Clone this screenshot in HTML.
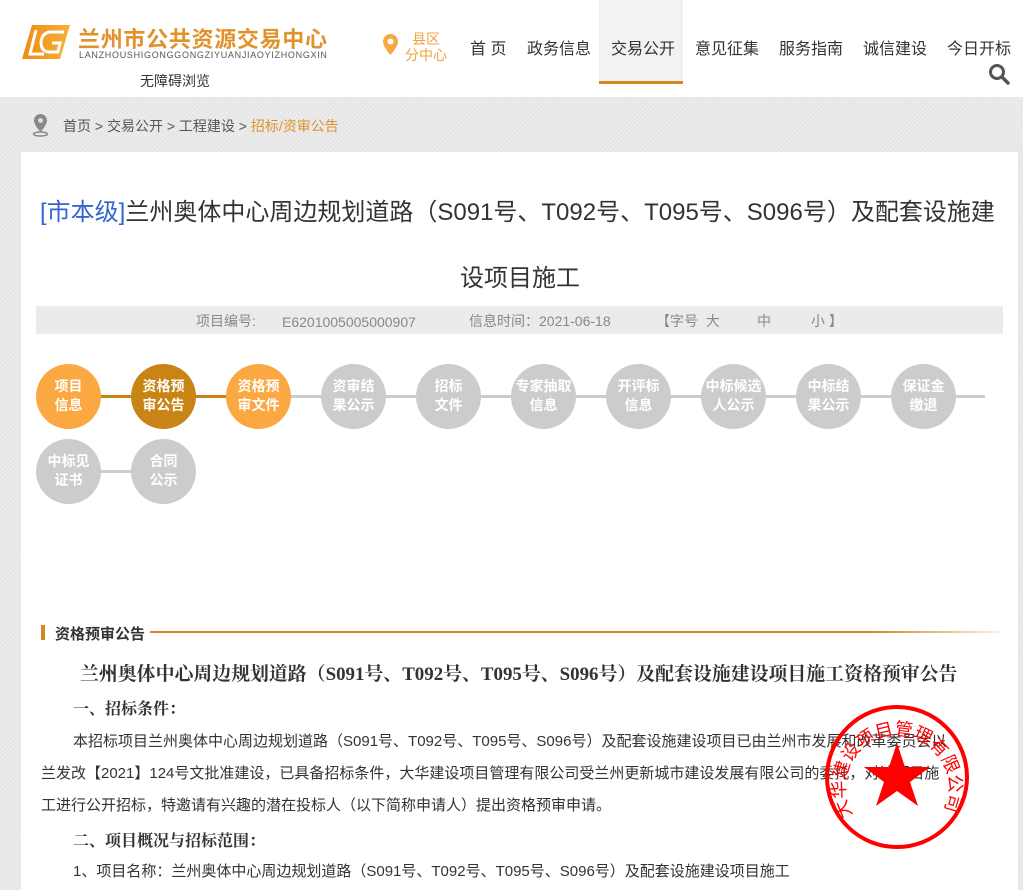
<!DOCTYPE html>
<html><head><meta charset="utf-8">
<style>
*{margin:0;padding:0;box-sizing:border-box}
body{width:1023px;height:890px;overflow:hidden;background:#fff;font-family:"Liberation Sans","Noto Sans CJK SC",sans-serif;color:#333;position:relative}
.a{position:absolute;white-space:nowrap}
.bg{position:absolute;left:0;top:97px;width:1023px;height:793px;background:repeating-linear-gradient(135deg,#ececec 0 2px,#e2e2e2 2px 3px)}
.card{position:absolute;left:21px;top:152px;width:997px;height:738px;background:#fff}
.nav{font-size:16px;color:#333;top:35px}
.c{position:absolute;width:65px;height:65px;border-radius:50%;color:#fff;font-weight:bold;font-size:14px;line-height:19px;text-align:center;padding-top:13px;background:#cccccc}
.o{background:#fba843}.d{background:#c98416}
.p{font-size:15px;color:#333}
.s{font-family:"Liberation Serif","Noto Serif CJK SC",serif;font-weight:bold;color:#333}
.i{font-size:14px;color:#888;top:312px;line-height:18px}
</style></head><body>
<svg class="a" style="left:22px;top:25px" width="48" height="34" viewBox="0 0 48 34"><defs><linearGradient id="g" x1="0" x2="1"><stop offset="0" stop-color="#f08a10"/><stop offset="1" stop-color="#f6b13c"/></linearGradient></defs><polygon points="10,0 48,0 38,34 0,34" fill="url(#g)"/><path d="M14 5 L8 29 L22 29" stroke="#fff" stroke-width="3" fill="none"/><path d="M42 7 L28 7 Q20 8 19 17 Q19 27 28 27 L36 27 L38 18 L30 18" stroke="#fff" stroke-width="3" fill="none"/></svg>
<div class="a" style="left:78px;top:22px;font-size:22px;font-weight:bold;color:#e0932c;letter-spacing:0.7px">兰州市公共资源交易中心</div>
<div class="a" style="left:79px;top:50px;font-size:9px;color:#555;letter-spacing:0.7px">LANZHOUSHIGONGGONGZIYUANJIAOYIZHONGXIN</div>
<div class="a" style="left:140px;top:71px;font-size:14px;color:#333">无障碍浏览</div>
<svg class="a" style="left:383px;top:34px" width="15" height="21" viewBox="0 0 15 21"><path d="M7.5 0A7.5 7.5 0 0 0 0 7.5C0 13 7.5 21 7.5 21S15 13 15 7.5A7.5 7.5 0 0 0 7.5 0Z" fill="#f7a845"/><circle cx="7.5" cy="7.5" r="3" fill="#fff"/></svg>
<div class="a" style="left:405px;top:31px;font-size:14px;line-height:16px;color:#f5a03a;text-align:center">县区<br>分中心</div>
<div class="a" style="left:599px;top:0;width:84px;height:84px;background:#f2f2f2;border-bottom:3px solid #d4891e"></div>
<div class="a nav" style="left:470px">首 页</div>
<div class="a nav" style="left:527px">政务信息</div>
<div class="a nav" style="left:611px">交易公开</div>
<div class="a nav" style="left:695px">意见征集</div>
<div class="a nav" style="left:779px">服务指南</div>
<div class="a nav" style="left:863px">诚信建设</div>
<div class="a nav" style="left:947px">今日开标</div>
<svg class="a" style="left:988px;top:63px" width="22" height="22" viewBox="0 0 22 22"><circle cx="9" cy="9" r="6.5" stroke="#555" stroke-width="3" fill="none"/><path d="M14 14L20 20" stroke="#555" stroke-width="3.5" stroke-linecap="round"/></svg>
<div class="bg"></div>
<svg class="a" style="left:32px;top:113px" width="17" height="24" viewBox="0 0 17 24"><path d="M8.5 1A6.5 6.5 0 0 0 2 7.5C2 12 8.5 19 8.5 19S15 12 15 7.5A6.5 6.5 0 0 0 8.5 1Z" fill="#888"/><circle cx="8.5" cy="7.5" r="2.5" fill="#ddd"/><ellipse cx="8.5" cy="21" rx="7" ry="2" fill="none" stroke="#888" stroke-width="1.5"/></svg>
<div class="a" style="left:63px;top:116px;font-size:14px;color:#555">首页 &gt; 交易公开 &gt; 工程建设 &gt; <span style="color:#e0932c">招标/资审公告</span></div>
<div class="card"></div>
<div class="a" style="left:40px;top:192px;font-size:24px;color:#333"><span style="color:#3366cc">[市本级]</span>兰州奥体中心周边规划道路（S091号、T092号、T095号、S096号）及配套设施建</div>
<div class="a" style="left:460px;top:258px;font-size:24px;color:#333">设项目施工</div>
<div class="a" style="left:36px;top:306px;width:967px;height:28px;background:#ebebeb"></div>
<div class="a i" style="left:196px">项目编号:</div>
<div class="a i" style="left:282px;top:313px">E6201005005000907</div>
<div class="a i" style="left:469px">信息时间：2021-06-18</div>
<div class="a i" style="left:656px">【字号&nbsp;&nbsp;大</div>
<div class="a i" style="left:757px">中</div>
<div class="a i" style="left:811px">小 】</div>
<div class="a" style="left:68px;top:395px;width:917px;height:3px;background:#cccccc"></div>
<div class="a" style="left:68px;top:395px;width:190px;height:3px;background:#c98416"></div>
<div class="a" style="left:68px;top:470px;width:95px;height:3px;background:#cccccc"></div>
<div class="c o" style="left:36px;top:364px">项目<br>信息</div>
<div class="c d" style="left:131px;top:364px">资格预<br>审公告</div>
<div class="c o" style="left:226px;top:364px">资格预<br>审文件</div>
<div class="c" style="left:321px;top:364px">资审结<br>果公示</div>
<div class="c" style="left:416px;top:364px">招标<br>文件</div>
<div class="c" style="left:511px;top:364px">专家抽取<br>信息</div>
<div class="c" style="left:606px;top:364px">开评标<br>信息</div>
<div class="c" style="left:701px;top:364px">中标候选<br>人公示</div>
<div class="c" style="left:796px;top:364px">中标结<br>果公示</div>
<div class="c" style="left:891px;top:364px">保证金<br>缴退</div>
<div class="c" style="left:36px;top:439px">中标见<br>证书</div>
<div class="c" style="left:131px;top:439px">合同<br>公示</div>
<div class="a" style="left:41px;top:625px;width:4px;height:15px;background:#d4891e"></div>
<div class="a" style="left:150px;top:631px;width:852px;height:2px;background:linear-gradient(90deg,#d4891e 85%,rgba(212,137,30,0.1))"></div>
<div class="a" style="left:55px;top:623px;font-size:15px;font-weight:bold;color:#333">资格预审公告</div>
<div class="a s" style="left:80px;top:659px;font-size:18.9px">兰州奥体中心周边规划道路（S091号、T092号、T095号、S096号）及配套设施建设项目施工资格预审公告</div>
<div class="a s" style="left:73px;top:696px;font-size:16px">一、招标条件：</div>
<div class="a p" style="left:73px;top:730px">本招标项目兰州奥体中心周边规划道路（S091号、T092号、T095号、S096号）及配套设施建设项目已由兰州市发展和改革委员会以</div>
<div class="a p" style="left:41px;top:762px">兰发改【2021】124号文批准建设，已具备招标条件，大华建设项目管理有限公司受兰州更新城市建设发展有限公司的委托，对该项目施</div>
<div class="a p" style="left:41px;top:794px">工进行公开招标，特邀请有兴趣的潜在投标人（以下简称申请人）提出资格预审申请。</div>
<div class="a s" style="left:73px;top:828px;font-size:16px">二、项目概况与招标范围：</div>
<div class="a p" style="left:73px;top:860px">1、项目名称：兰州奥体中心周边规划道路（S091号、T092号、T095号、S096号）及配套设施建设项目施工</div>
<svg class="a" style="left:823px;top:703px" width="148" height="148" viewBox="0 0 148 148"><defs><path id="arc" d="M30 112 A52 52 0 1 1 118 112"/></defs><circle cx="74" cy="74" r="70" fill="none" stroke="#f00" stroke-width="4"/><polygon points="74,40 82,64 107,64 87,79 95,103 74,88 53,103 61,79 41,64 66,64" fill="#f00"/><text font-size="18" fill="#f00" font-family="Noto Sans CJK SC,sans-serif"><textPath href="#arc">大华建设项目管理有限公司</textPath></text></svg>
</body></html>
